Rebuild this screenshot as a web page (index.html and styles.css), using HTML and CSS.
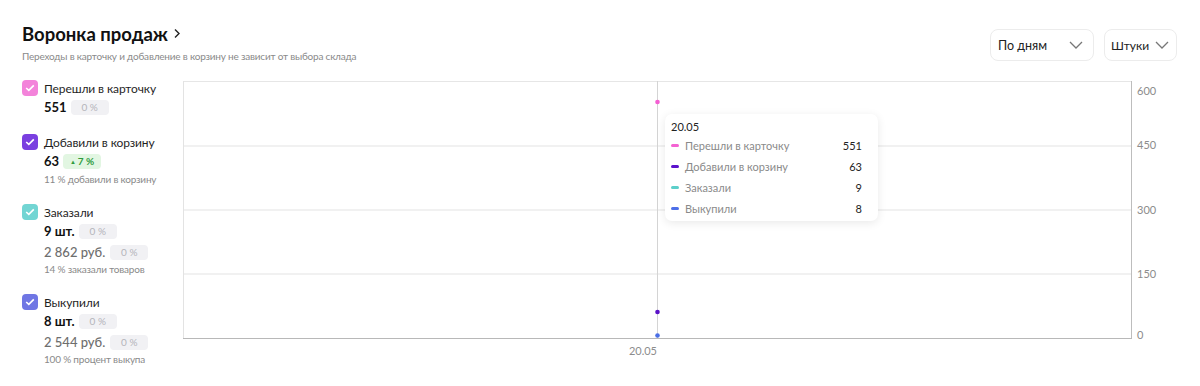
FILE: index.html
```html
<!DOCTYPE html>
<html lang="ru">
<head>
    <meta charset="UTF-8">
    <meta name="viewport" content="width=device-width, initial-scale=1.0">
    <title>Воронка продаж</title>
    <link rel="stylesheet" href="styles.css">
</head>
<body>
    <div class="page">
        <!-- шапка -->
        <div class="header">
            <div class="title-block">
                <h1 class="title">Воронка продаж
                    <svg class="title-arrow" width="8" height="11" viewBox="0 0 8 11"><path d="M2 1.5 L6 5.5 L2 9.5" fill="none" stroke="#222" stroke-width="1.4"/></svg>
                </h1>
                <div class="subtitle">Переходы в карточку и добавление в корзину не зависит от выбора склада</div>
            </div>
            <div class="controls">
                <div class="select select-days">
                    <span>По дням</span>
                    <svg width="14" height="8" viewBox="0 0 14 8"><path d="M1 1 L7 7 L13 1" fill="none" stroke="#777" stroke-width="1.3"/></svg>
                </div>
                <div class="select select-units">
                    <span>Штуки</span>
                    <svg width="14" height="8" viewBox="0 0 14 8"><path d="M1 1 L7 7 L13 1" fill="none" stroke="#777" stroke-width="1.3"/></svg>
                </div>
            </div>
        </div>

        <div class="content">
            <!-- легенда -->
            <div class="legend">
                <div class="legend-item">
                    <div class="legend-head">
                        <span class="check check-pink"><svg width="10" height="8" viewBox="0 0 10 8"><path d="M1.2 4 L3.8 6.4 L8.8 1.4" fill="none" stroke="#fff" stroke-width="1.6"/></svg></span>
                        <span class="legend-label">Перешли в карточку</span>
                    </div>
                    <div class="value-row">
                        <span class="value">551</span>
                        <span class="badge">0 %</span>
                    </div>
                </div>

                <div class="legend-item">
                    <div class="legend-head">
                        <span class="check check-purple"><svg width="10" height="8" viewBox="0 0 10 8"><path d="M1.2 4 L3.8 6.4 L8.8 1.4" fill="none" stroke="#fff" stroke-width="1.6"/></svg></span>
                        <span class="legend-label">Добавили в корзину</span>
                    </div>
                    <div class="value-row">
                        <span class="value">63</span>
                        <span class="badge badge-up"><span class="tri">▲</span>7 %</span>
                    </div>
                    <div class="note">11 % добавили в корзину</div>
                </div>

                <div class="legend-item">
                    <div class="legend-head">
                        <span class="check check-teal"><svg width="10" height="8" viewBox="0 0 10 8"><path d="M1.2 4 L3.8 6.4 L8.8 1.4" fill="none" stroke="#fff" stroke-width="1.6"/></svg></span>
                        <span class="legend-label">Заказали</span>
                    </div>
                    <div class="value-row">
                        <span class="value">9 шт.</span>
                        <span class="badge">0 %</span>
                    </div>
                    <div class="value-row money-row">
                        <span class="money">2 862 руб.</span>
                        <span class="badge">0 %</span>
                    </div>
                    <div class="note note-tight">14 % заказали товаров</div>
                </div>

                <div class="legend-item">
                    <div class="legend-head">
                        <span class="check check-blue"><svg width="10" height="8" viewBox="0 0 10 8"><path d="M1.2 4 L3.8 6.4 L8.8 1.4" fill="none" stroke="#fff" stroke-width="1.6"/></svg></span>
                        <span class="legend-label">Выкупили</span>
                    </div>
                    <div class="value-row">
                        <span class="value">8 шт.</span>
                        <span class="badge">0 %</span>
                    </div>
                    <div class="value-row money-row">
                        <span class="money">2 544 руб.</span>
                        <span class="badge">0 %</span>
                    </div>
                    <div class="note note-tight">100 % процент выкупа</div>
                </div>
            </div>

            <!-- график -->
            <div class="chart">
                <svg class="chart-svg" width="994" height="290" viewBox="0 0 994 290">
                    <line x1="0" y1="2.5" x2="948" y2="2.5" stroke="#e6e6e6"/>
                    <line x1="0" y1="67" x2="948" y2="67" stroke="#e3e3e3"/>
                    <line x1="0" y1="131" x2="948" y2="131" stroke="#e3e3e3"/>
                    <line x1="0" y1="195" x2="948" y2="195" stroke="#e3e3e3"/>
                    <line x1="0.5" y1="2" x2="0.5" y2="260" stroke="#e3e3e3"/>
                    <line x1="948.5" y1="2" x2="948.5" y2="260" stroke="#bdbdbd"/>
                    <line x1="0" y1="259.5" x2="949" y2="259.5" stroke="#b8b8b8"/>
                    <line x1="474.5" y1="2" x2="474.5" y2="259" stroke="#d4d4d4"/>

                    <circle cx="474.5" cy="23" r="2.3" fill="#f45fd3"/>
                    <circle cx="474.5" cy="233" r="2.3" fill="#5a12c8"/>
                    <circle cx="474.5" cy="256.5" r="2.3" fill="#4b6fe6"/>

                    <g class="axis-text">
                        <text x="954" y="16">600</text>
                        <text x="954" y="70">450</text>
                        <text x="954" y="135">300</text>
                        <text x="954" y="199">150</text>
                        <text x="954" y="260">0</text>
                        <text x="474" y="276" text-anchor="end">20.05</text>
                    </g>
                </svg>

                <div class="tooltip">
                    <div class="tooltip-date">20.05</div>
                    <div class="tooltip-row">
                        <span class="swatch swatch-pink"></span>
                        <span class="tooltip-label">Перешли в карточку</span>
                        <span class="tooltip-value">551</span>
                    </div>
                    <div class="tooltip-row">
                        <span class="swatch swatch-purple"></span>
                        <span class="tooltip-label">Добавили в корзину</span>
                        <span class="tooltip-value">63</span>
                    </div>
                    <div class="tooltip-row">
                        <span class="swatch swatch-teal"></span>
                        <span class="tooltip-label">Заказали</span>
                        <span class="tooltip-value">9</span>
                    </div>
                    <div class="tooltip-row">
                        <span class="swatch swatch-blue"></span>
                        <span class="tooltip-label">Выкупили</span>
                        <span class="tooltip-value">8</span>
                    </div>
                </div>
            </div>
        </div>
    </div>
</body>
</html>
```

FILE: styles.css
```css
* {
    box-sizing: border-box;
    margin: 0;
    padding: 0;
}

body {
    font-family: Lato, "Noto Sans", "Liberation Sans", sans-serif;
    background-color: #fff;
    color: #1f1f1f;
}

.page {
    padding: 22px 23px 0 22px;
}

.header {
    display: flex;
    justify-content: space-between;
    align-items: flex-start;
    height: 57px;
}

.title {
    display: flex;
    align-items: center;
    gap: 5px;
    margin-top: 1px;
    font-size: 18.5px;
    line-height: 22px;
    font-weight: 700;
    color: #111;
}

.title-arrow {
    margin-top: -1px;
}

.subtitle {
    margin-top: 4px;
    font-size: 10px;
    line-height: 14px;
    letter-spacing: -0.2px;
    color: #8a8a8a;
}

.controls {
    display: flex;
    gap: 10px;
    margin-top: 7px;
}

.select {
    display: flex;
    align-items: center;
    justify-content: space-between;
    height: 32px;
    padding: 0 10px 0 7px;
    border: 1px solid #ececec;
    border-radius: 8px;
    font-size: 12.5px;
    color: #222;
}

.select-days {
    width: 104px;
}

.select-units {
    width: 73px;
    padding: 0 7px 0 6px;
    font-size: 12px;
}

.content {
    display: flex;
}

.legend {
    width: 162px;
    display: flex;
    flex-direction: column;
    gap: 18px;
    padding-top: 1px;
}

.legend-head {
    display: flex;
    align-items: center;
    gap: 6px;
    height: 16px;
}

.check {
    width: 16px;
    height: 16px;
    border-radius: 4px;
    display: flex;
    align-items: center;
    justify-content: center;
}

.check-pink { background-color: #f383da; }
.check-purple { background-color: #7a3fe0; }
.check-teal { background-color: #72d5d3; }
.check-blue { background-color: #6f76e4; }

.legend-label {
    font-size: 12px;
    letter-spacing: -0.1px;
    color: #1f1f1f;
}

.value-row {
    display: flex;
    align-items: center;
    gap: 4px;
    height: 18px;
    margin-top: 2px;
    padding-left: 22px;
}

.value {
    font-size: 13px;
    font-weight: 700;
    color: #111;
}

.money-row {
    margin-top: 3px;
}

.money {
    font-size: 13px;
    font-weight: 500;
    color: #6e6e6e;
    margin-right: 1px;
}

.badge {
    display: inline-flex;
    align-items: center;
    justify-content: center;
    gap: 2px;
    width: 38px;
    height: 15px;
    border-radius: 4px;
    background-color: #f1f1f4;
    color: #b4b4ba;
    font-size: 10px;
}

.badge-up {
    background-color: #e2f6e2;
    color: #2f9b3f;
    font-weight: 700;
}

.tri {
    font-size: 6px;
}

.note {
    margin-top: 2px;
    padding-left: 22px;
    font-size: 10px;
    line-height: 14px;
    letter-spacing: -0.2px;
    color: #8a8a8a;
}

.note-tight {
    margin-top: 1px;
}

.chart {
    position: relative;
    flex: 1;
}

.chart-svg {
    display: block;
}

.axis-text text {
    font-family: Lato, "Liberation Sans", sans-serif;
    font-size: 11px;
    fill: #8c8c8c;
}

.tooltip {
    position: absolute;
    left: 482px;
    top: 35px;
    width: 213px;
    padding: 6px 16px 2px 6px;
    background-color: #fff;
    border-radius: 7px;
    box-shadow: 0 2px 10px rgba(0, 0, 0, 0.09);
    font-size: 11px;
}

.tooltip-date {
    color: #222;
    line-height: 14px;
    margin-bottom: 1px;
}

.tooltip-row {
    display: flex;
    align-items: center;
    height: 21px;
}

.swatch {
    width: 8px;
    height: 3px;
    border-radius: 2px;
    margin-right: 6px;
}

.swatch-pink { background-color: #f462d2; }
.swatch-purple { background-color: #5b12cc; }
.swatch-teal { background-color: #5ccfca; }
.swatch-blue { background-color: #4d6fe8; }

.tooltip-label {
    flex: 1;
    color: #8a8a8a;
}

.tooltip-value {
    color: #222;
}
```
